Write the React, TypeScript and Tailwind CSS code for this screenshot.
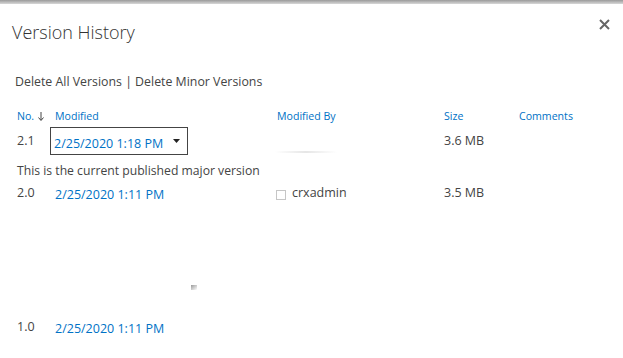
import React from "react";

const font = { fontFamily: '"Open Sans", "Noto Sans", sans-serif' };

const App = () => {
  return (
    <div className="w-[623px] h-[358px] bg-white relative overflow-hidden text-[#444]" style={font}>
      <div className="h-[4px] bg-gradient-to-b from-[#9a9a9a] to-[#d8d8d8]" />

      <button className="absolute right-[12px] top-[17px] w-[14px] h-[14px] flex items-center justify-center text-[#666]">
        <svg width="11" height="11" viewBox="0 0 11 11">
          <path d="M1 1 L10 10 M10 1 L1 10" stroke="#666" strokeWidth="2" />
        </svg>
      </button>

      {/* leftover shadow speck */}
      <div className="absolute left-[191px] top-[285px] w-[6px] h-[5px] bg-gradient-to-br from-[#999] to-transparent" />

      <div className="pl-[12px] pt-[16px]">
        <h1 className="text-[18px] font-light leading-[24px] text-[#333]">Version History</h1>
      </div>

      <div className="pl-[15px] pt-[29px] text-[12.35px] leading-[18px] text-[#444]">
        Delete All Versions | Delete Minor Versions
      </div>

      <div className="pl-[17px] pt-[18px] text-[10.6px] leading-[14px] text-[#0072c6] grid grid-cols-[38px_222px_167px_75px_1fr]">
        <div className="flex items-center gap-[4px]">
          No.
          <svg width="6" height="9" viewBox="0 0 6 9">
            <path d="M3 0 V8 M0.5 5.5 L3 8.5 L5.5 5.5" stroke="#444" strokeWidth="1" fill="none" />
          </svg>
        </div>
        <div>Modified</div>
        <div>Modified By</div>
        <div>Size</div>
        <div>Comments</div>
      </div>

      <div className="pl-[17px] pt-[4px] grid grid-cols-[38px_222px_167px_75px_1fr] text-[12.5px]">
        <div className="pt-[5px] text-[#444]">2.1</div>
        <div className="-ml-[5px]">
          <div className="w-[138px] h-[28px] border border-[#444] flex items-center justify-between pl-[3px] pr-[7px] pt-[6px]">
            <span className="text-[#0072c6]">2/25/2020 1:18 PM</span>
            <svg width="7" height="4" viewBox="0 0 7 4" className="-mt-[6px]">
              <path d="M0 0 H7 L3.5 4 Z" fill="#222" />
            </svg>
          </div>
        </div>
        <div className="relative">
          <div className="absolute left-[-2px] top-[24px] w-[62px] h-[2px] bg-gradient-to-r from-transparent via-[#e6e6e6] to-transparent" />
        </div>
        <div className="pt-[5px] text-[#444]">3.6 MB</div>
        <div />
      </div>

      <div className="pl-[17px] pt-[7px] text-[12.2px] leading-[18px] text-[#444]">
        This is the current published major version
      </div>

      <div className="pl-[17px] pt-[6px] grid grid-cols-[38px_222px_167px_75px_1fr] text-[12.5px] leading-[18px] h-[134px]">
        <div className="text-[#444] -mt-[2px]">2.0</div>
        <div className="text-[#0072c6]">2/25/2020 1:11 PM</div>
        <div className="flex items-start gap-[6px] text-[#444] -ml-[1px]">
          <span className="mt-[4px] w-[10px] h-[10px] border border-[#c6c6c6] bg-white" />
          <span className="-mt-[2px]">crxadmin</span>
        </div>
        <div className="text-[#444] -mt-[2px]">3.5 MB</div>
        <div />
      </div>

      <div className="pl-[17px] pt-[6px] grid grid-cols-[38px_222px_167px_75px_1fr] text-[12.5px] leading-[18px]">
        <div className="text-[#444] -mt-[2px]">1.0</div>
        <div className="text-[#0072c6]">2/25/2020 1:11 PM</div>
      </div>
    </div>
  );
};

export default App;
